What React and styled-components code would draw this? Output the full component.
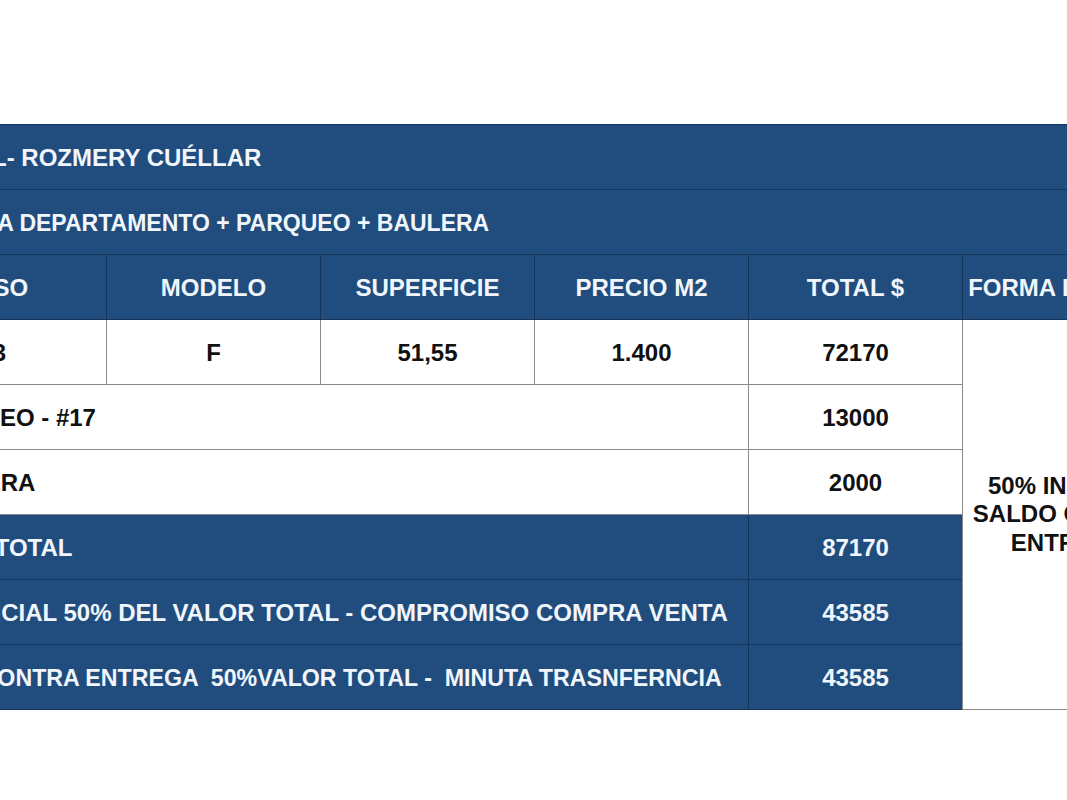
import styled, { createGlobalStyle } from 'styled-components'

const GlobalStyle = createGlobalStyle`
  html, body {
    margin: 0;
    padding: 0;
    background: #ffffff;
  }
  body {
    font-family: 'Liberation Sans', Arial, sans-serif;
  }
`

const BLUE = '#204d7e'
const BLUE_LINE = '#14345a'
const GRAY_LINE = '#8a8a8a'

const Frame = styled.main`
  width: 100vw;
  height: 100vh;
  overflow: hidden;
  padding-top: 124px;
  box-sizing: border-box;
`

const Sheet = styled.table`
  margin-left: -108px;
  width: 1284px;
  table-layout: fixed;
  border-collapse: collapse;
  border-top: 1px solid #9aa6b3;
  border-bottom: 1px solid #b9c2cc;
`

const Col = styled.col`
  width: 214px;
`

const Row = styled.tr`
  height: 65px;
`

const Cell = styled.td`
  box-sizing: border-box;
  padding: 2px 0 0 ${(p) => p.$indent ?? 0}px;
  font-size: ${(p) => p.$size ?? 24}px;
  font-weight: 700;
  line-height: 28.5px;
  white-space: pre;
  text-align: ${(p) => p.$align ?? 'center'};
  vertical-align: middle;
  background: ${(p) => (p.$tone === 'white' ? '#ffffff' : BLUE)};
  color: ${(p) => (p.$tone === 'white' ? '#111111' : '#f1f6fc')};
  border: 1px solid ${(p) => (p.$tone === 'white' ? GRAY_LINE : BLUE_LINE)};
`

const PaymentCell = styled(Cell)`
  white-space: normal;
  padding: 0 6px;
`

const headers = ['PISO', 'MODELO', 'SUPERFICIE', 'PRECIO M2', 'TOTAL $', 'FORMA DE PAGO']

const extras = [
  { label: 'PARQUEO - #17', total: '13000', indent: 22 },
  { label: 'BAULERA', total: '2000', indent: 25 },
]

const summary = [
  { label: 'PRECIO TOTAL', total: '87170', indent: 3, size: 24 },
  {
    label: 'PAGO INICIAL 50% DEL VALOR TOTAL - COMPROMISO COMPRA VENTA',
    total: '43585',
    indent: 2,
    size: 24,
  },
  {
    label: 'SALDO CONTRA ENTREGA  50%VALOR TOTAL -  MINUTA TRASNFERNCIA',
    total: '43585',
    indent: 0,
    size: 23.2,
  },
]

const App = () => {
  return (
    <>
      <GlobalStyle />
      <Frame>
        <Sheet>
          <colgroup>
            {headers.map((h) => (
              <Col key={h} />
            ))}
          </colgroup>
          <tbody>
            <Row>
              <Cell colSpan={6} $align="left" $indent={11}>
                MANUEL- ROZMERY CUÉLLAR
              </Cell>
            </Row>
            <Row>
              <Cell colSpan={6} $align="left" $indent={28} $size={23}>
                OFERTA DEPARTAMENTO + PARQUEO + BAULERA
              </Cell>
            </Row>
            <Row>
              {headers.map((h) => (
                <Cell key={h}>{h}</Cell>
              ))}
            </Row>
            <Row>
              <Cell $tone="white">3</Cell>
              <Cell $tone="white">F</Cell>
              <Cell $tone="white">51,55</Cell>
              <Cell $tone="white">1.400</Cell>
              <Cell $tone="white">72170</Cell>
              <PaymentCell $tone="white" rowSpan={6}>
                50% INICIAL Y SALDO CONTRA ENTREGA
              </PaymentCell>
            </Row>
            {extras.map((r) => (
              <Row key={r.label}>
                <Cell $tone="white" colSpan={4} $align="left" $indent={r.indent}>
                  {r.label}
                </Cell>
                <Cell $tone="white">{r.total}</Cell>
              </Row>
            ))}
            {summary.map((r) => (
              <Row key={r.label}>
                <Cell colSpan={4} $align="left" $indent={r.indent} $size={r.size}>
                  {r.label}
                </Cell>
                <Cell>{r.total}</Cell>
              </Row>
            ))}
          </tbody>
        </Sheet>
      </Frame>
    </>
  )
}

export default App
